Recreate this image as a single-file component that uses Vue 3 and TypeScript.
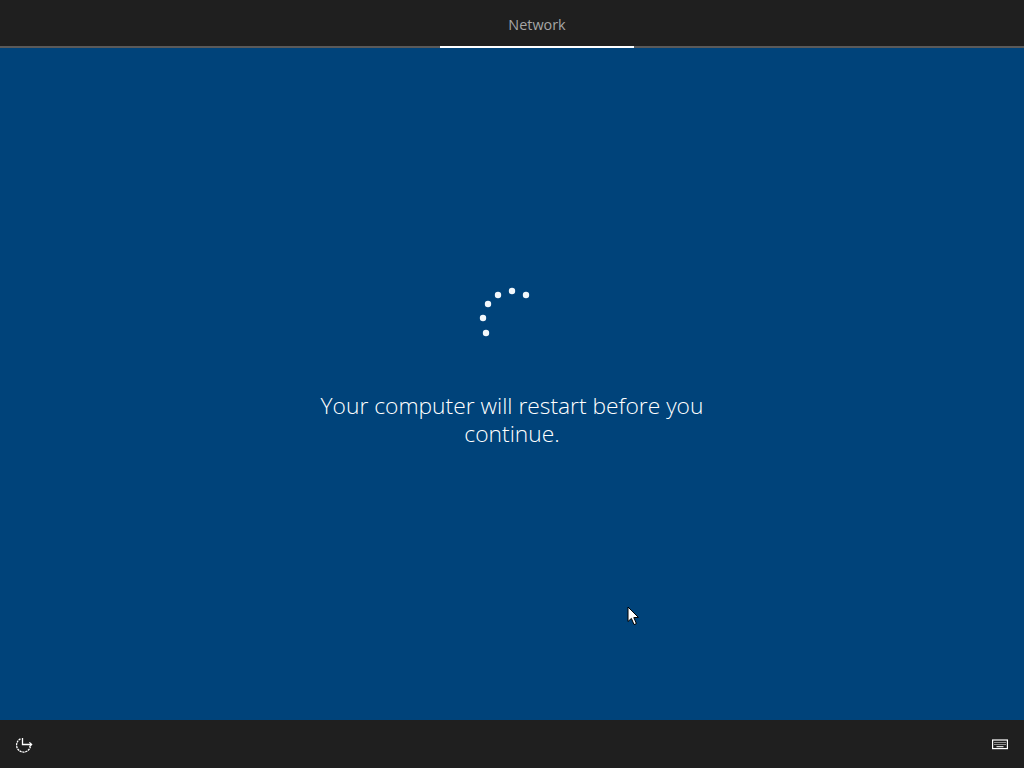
<script setup lang="ts">
const dots: [number, number][] = [
  [486, 333],
  [483, 318],
  [488, 304],
  [498, 295],
  [512, 291],
  [526, 295],
]
const originX = 476
const originY = 284
</script>

<template>
  <div class="screen">
    <header class="top">
      <div class="tab">Network</div>
    </header>
    <main class="main">
      <svg class="spinner" width="60" height="56" viewBox="0 0 60 56">
        <circle v-for="(d, i) in dots" :key="i" :cx="d[0] - originX" :cy="d[1] - originY" r="3.2" fill="#f2f8fc" />
      </svg>
      <p class="message">Your computer will restart before you continue.</p>
      <svg class="cursor" width="13" height="20" viewBox="0 0 13 20">
        <path d="M1 1 L1 15.5 L4.4 12.4 L7 18.6 L9.4 17.6 L6.8 11.6 L11.4 11.4 Z" fill="#fff" stroke="#000" stroke-width="1" />
      </svg>
    </main>
    <footer class="bottom">
      <svg class="icon" width="18" height="18" viewBox="0 0 18 18" fill="none" stroke="#fff" stroke-width="1.3">
        <path d="M4.5 2.8 A7 7 0 1 0 14.4 10.6" stroke-dasharray="2.2 0.7" />
        <path d="M6.5 2 V8.5 H15.6" />
        <path d="M13.4 6.4 L15.6 8.5 L13.4 10.6" />
      </svg>
      <svg class="icon" width="16" height="11" viewBox="0 0 16 11" fill="none" stroke="#fff">
        <rect x="0.6" y="1" width="14.8" height="8.6" stroke-width="1.2" />
        <path d="M2.5 3.5 H13.5 M2.5 5.5 H13.5" stroke-width="1" stroke-dasharray="1 1" />
        <path d="M4.5 7.7 H11.5" stroke-width="1" />
      </svg>
    </footer>
  </div>
</template>

<style>
html,
body {
  margin: 0;
  background: #00437a;
}
</style>

<style scoped>
.screen {
  width: 1024px;
  height: 768px;
  display: flex;
  flex-direction: column;
  overflow: hidden;
  font-family: "Open Sans", "Noto Sans", sans-serif;
}
.top {
  height: 46px;
  flex: none;
  background: #1f1f1f;
  border-bottom: 2px solid #5a5a5a;
  display: flex;
  padding-left: 440px;
}
.tab {
  width: 194px;
  height: 46px;
  margin-bottom: -2px;
  border-bottom: 2px solid #fff;
  color: #a6a6a6;
  font-size: 14.4px;
  line-height: 49px;
  text-align: center;
}
.main {
  flex: 1;
  position: relative;
  background: #00437a;
  display: flex;
  flex-direction: column;
  align-items: center;
}
.spinner {
  margin-top: 236px;
  margin-left: -12px;
  display: block;
}
.message {
  width: 400px;
  margin: 52px 0 0;
  color: #fff;
  font-size: 22.8px;
  font-weight: 300;
  line-height: 28px;
  text-align: center;
}
.cursor {
  position: absolute;
  left: 627px;
  top: 558px;
}
.bottom {
  height: 47px;
  padding-top: 1px;
  flex: none;
  background: #1f1f1f;
  display: flex;
  align-items: center;
  justify-content: space-between;
  padding-left: 16px;
  padding-right: 16px;
}
.icon {
  display: block;
}
</style>
